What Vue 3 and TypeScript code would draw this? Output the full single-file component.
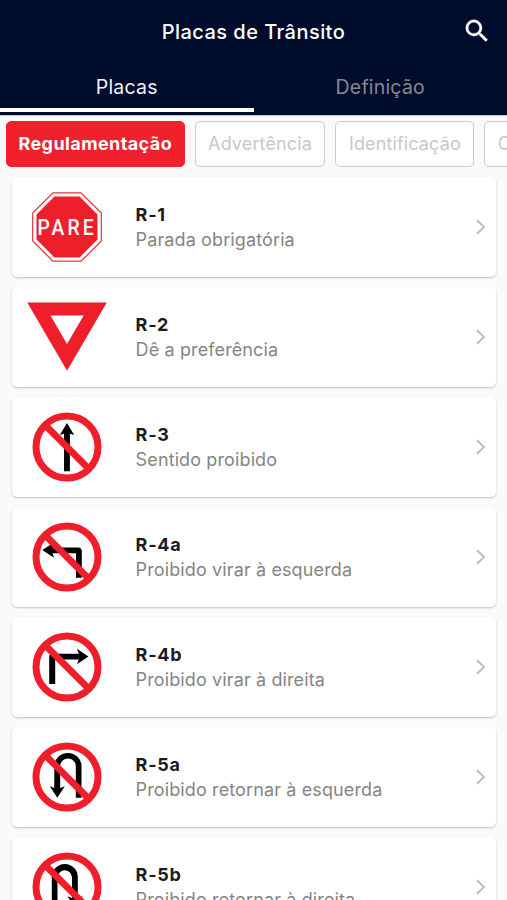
<script setup lang="ts">
import { ref } from 'vue'

type SignKind = 'stop' | 'yield' | 'straight' | 'left' | 'right' | 'uturn-left' | 'uturn-right'

interface Sign {
  code: string
  name: string
  kind: SignKind
}

const tabs: string[] = ['Placas', 'Definição']
const activeTab = ref(0)

const categories: string[] = ['Regulamentação', 'Advertência', 'Identificação', 'Orientação']
const activeCategory = ref(0)

const signs: Sign[] = [
  { code: 'R-1', name: 'Parada obrigatória', kind: 'stop' },
  { code: 'R-2', name: 'Dê a preferência', kind: 'yield' },
  { code: 'R-3', name: 'Sentido proibido', kind: 'straight' },
  { code: 'R-4a', name: 'Proibido virar à esquerda', kind: 'left' },
  { code: 'R-4b', name: 'Proibido virar à direita', kind: 'right' },
  { code: 'R-5a', name: 'Proibido retornar à esquerda', kind: 'uturn-left' },
  { code: 'R-5b', name: 'Proibido retornar à direita', kind: 'uturn-right' },
]

// Black arrow of each prohibition sign, on an 80 x 80 canvas
const arrows: Partial<Record<SignKind, string>> = {
  straight: 'M40 16 L47.2 28 L42.9 26.8 V64.2 H37 V26.8 L32.8 28 Z',
  left: 'M15.3 32.9 L27 25.5 L25.5 30.4 H51 Q54.8 30.4 54.8 34.2 V60.7 H49 V36.3 H25.5 L27 40.7 Z',
  right: 'M61.4 29.5 L50 37.2 L51.8 32.5 H28.2 V57 H22.2 V30 Q22.2 26.7 25.4 26.7 H51.8 L50 21.8 Z',
  'uturn-left':
    'M30.3 60.7 L22.8 49.3 L27.3 51 V29 A13.6 13 0 0 1 54.5 29 V60.7 H48.8 V29 A7.8 7.6 0 0 0 33.2 29 V51 L37.8 49.3 Z',
  'uturn-right':
    'M48 60.7 L40.4 49.3 L45 51 V30 A7.3 7.6 0 0 0 30.5 30 V60.7 H24.8 V30 A13 13 0 0 1 50.8 30 V51 L55.6 49.3 Z',
}
</script>

<template>
  <div class="screen">
    <header class="header">
      <div class="topbar">
        <span class="side"></span>
        <h1 class="title">Placas de Trânsito</h1>
        <button class="side search" aria-label="Buscar">
          <svg width="30" height="30" viewBox="0 0 24 24" fill="#fff" stroke="#fff" stroke-width="0.3">
            <path
              d="M15.5 14h-.79l-.28-.27A6.47 6.47 0 0 0 16 9.5 6.5 6.5 0 1 0 9.5 16c1.61 0 3.09-.59 4.23-1.57l.27.28v.79l5 4.99L20.49 19l-4.99-5zm-6 0C7.01 14 5 11.99 5 9.5S7.01 5 9.5 5 14 7.01 14 9.5 11.99 14 9.5 14z"
            />
          </svg>
        </button>
      </div>
      <nav class="tabs">
        <button
          v-for="(tab, i) in tabs"
          :key="tab"
          class="tab"
          :class="{ active: i === activeTab }"
          @click="activeTab = i"
        >
          {{ tab }}
        </button>
      </nav>
    </header>

    <div class="chips">
      <button
        v-for="(category, i) in categories"
        :key="category"
        class="chip"
        :class="{ selected: i === activeCategory }"
        @click="activeCategory = i"
      >
        {{ category }}
      </button>
    </div>

    <main class="list">
      <article v-for="sign in signs" :key="sign.code" class="card">
        <svg class="sign" width="80" height="80" viewBox="0 0 80 80">
          <template v-if="sign.kind === 'stop'">
            <path
              d="M26 5.8 H54 L74.3 26 V54 L54 74.2 H26 L5.7 54 V26 Z"
              fill="#fff"
              stroke="#e8323a"
              stroke-width="1.2"
            />
            <path d="M27.4 9.6 H52.6 L70.5 27.5 V52.5 L52.6 70.4 H27.4 L9.5 52.5 V27.5 Z" fill="#ee1f2a" />
            <text class="stop-text" transform="translate(10.6 48) scale(0.86 1)">PARE</text>
          </template>
          <path
            v-else-if="sign.kind === 'yield'"
            d="M0.3 5.6 H79.8 L40 73.8 Z M23.5 18.6 L40 47 L56.7 18.6 Z"
            fill="#ee1f2a"
            fill-rule="evenodd"
          />
          <template v-else>
            <path :d="arrows[sign.kind]" fill="#000" />
            <circle cx="40" cy="40" r="31" fill="none" stroke="#ee1f2a" stroke-width="7" />
            <path d="M18.5 18.5 L61.5 61.5" stroke="#ee1f2a" stroke-width="6.8" />
          </template>
        </svg>
        <div class="info">
          <strong class="code">{{ sign.code }}</strong>
          <span class="name">{{ sign.name }}</span>
        </div>
        <svg class="chevron" width="10" height="16" viewBox="0 0 10 16" fill="none">
          <path d="M1 1.2 L8 8 L1 14.8" stroke="#bdbdbd" stroke-width="1.9" />
        </svg>
      </article>
    </main>
  </div>
</template>

<style>
body {
  background: #fafafa;
  overflow: hidden;
}
</style>

<style scoped>
.screen {
  box-sizing: border-box;
  height: 900px;
  overflow: hidden;
  display: flex;
  flex-direction: column;
  background: #fafafa;
  font-family: Inter, 'Liberation Sans', sans-serif;
}

button {
  margin: 0;
  padding: 0;
  border: 0;
  background: none;
  font: inherit;
}

.header {
  flex: none;
  height: 116px;
  background: #000c2c;
  border-bottom: 1px solid #c5c8d0;
  box-sizing: border-box;
  color: #fff;
}

.topbar {
  display: flex;
  align-items: center;
  height: 62px;
}

.side {
  flex: none;
  width: 60px;
  height: 30px;
}

.search {
  display: flex;
  justify-content: center;
}

.title {
  flex: 1;
  margin: 0;
  padding-top: 1px;
  text-align: center;
  font-size: 20px;
  font-weight: 500;
  letter-spacing: 0.45px;
  line-height: 24px;
}

.tabs {
  display: flex;
  height: 50px;
}

.tab {
  flex: 1;
  box-sizing: border-box;
  padding-top: 3px;
  border-bottom: 4px solid transparent;
  color: #858a8f;
  font-size: 19.5px;
  letter-spacing: 0.2px;
}

.tab.active {
  color: #f1f3f8;
  border-bottom-color: #fff;
}

.chips {
  flex: none;
  display: flex;
  gap: 10px;
  padding: 5px 6px 0;
  overflow: hidden;
}

.chip {
  flex: none;
  box-sizing: border-box;
  height: 46px;
  padding: 0 12.5px 1px;
  border: 1.5px solid #cbcbcb;
  border-radius: 5px;
  background: #fff;
  color: #c8c8c8;
  font-size: 18px;
  letter-spacing: 0.13px;
}

.chip.selected {
  padding: 0 11.5px 1px;
  border-color: #f0202d;
  background: #f0202d;
  color: #fff;
  font-weight: 700;
  letter-spacing: 0.4px;
}

.list {
  display: flex;
  flex-direction: column;
  gap: 10px;
  padding: 10px 11px 0 12px;
}

.card {
  flex: none;
  display: flex;
  align-items: center;
  box-sizing: border-box;
  height: 100px;
  padding: 0 10px 0 15px;
  border-radius: 5px;
  background: #fff;
  box-shadow: 0 1px 2px rgba(0, 0, 0, 0.22);
}

.sign {
  flex: none;
}

.stop-text {
  font-family: Roboto, sans-serif;
  font-size: 22.5px;
  font-weight: 500;
  letter-spacing: 3.6px;
  fill: #fff;
}

.info {
  flex: 1;
  display: flex;
  flex-direction: column;
  margin-left: 28.6px;
}

.code {
  color: #1c1c1c;
  font-size: 18px;
  font-weight: 700;
  letter-spacing: 0.75px;
  line-height: 25px;
}

.name {
  color: #858585;
  font-size: 18px;
  letter-spacing: 0.12px;
  line-height: 25px;
}
</style>
